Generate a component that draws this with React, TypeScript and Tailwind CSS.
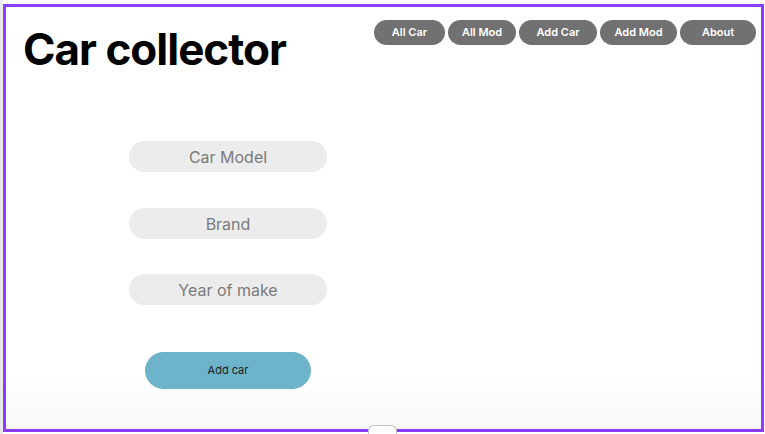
import React from 'react';

const navItems = ['All Car', 'All Mod', 'Add Car', 'Add Mod', 'About'];
const navWidths = ['w-[71px]', 'w-[68px]', 'w-[78px]', 'w-[77px]', 'w-[76px]'];
const fields = [
  { label: 'Car Model', gap: '' },
  { label: 'Brand', gap: 'mt-[36px]' },
  { label: 'Year of make', gap: 'mt-[35px]' },
];

export default function App() {
  return (
    <div
      className="relative flex w-[765px] h-[434px] bg-white overflow-hidden"
      style={{ fontFamily: 'Inter, "Noto Sans", sans-serif' }}
    >
      {/* editor gutter */}
      <div className="w-[3px] h-full bg-[#e9e9ec]" />

      {/* selected page */}
      <div className="mt-[4px] w-[761px] h-[428px] border-[3px] border-[#8b3dff] bg-linear-to-b from-white from-88% to-[#f6f7f7] flex flex-col">
        {/* Header */}
        <div className="flex items-start justify-between pl-[17px] pr-[5px]">
          <h1 className="mt-[20px] text-[44px] leading-none font-bold text-black tracking-[-1px]">
            Car collector
          </h1>
          <nav className="mt-[13px] flex gap-[3px]">
            {navItems.map((item, i) => (
              <button
                key={item}
                className={`${navWidths[i]} h-[25px] rounded-full bg-[#717171] text-white text-[11px] font-semibold`}
              >
                {item}
              </button>
            ))}
          </nav>
        </div>

        {/* Form */}
        <div className="ml-[123px] mt-[70px] w-[198px] flex flex-col items-center">
          {fields.map((f) => (
            <div
              key={f.label}
              className={`w-full h-[31px] rounded-full bg-[#ececec] flex items-center justify-center text-[16px] text-[#7b7b7b] ${f.gap}`}
            >
              {f.label}
            </div>
          ))}
          <button className="mt-[47px] w-[166px] h-[37px] rounded-full bg-[#6db3c9] text-[11px] text-[#1c1c1c]">
            Add car
          </button>
        </div>
      </div>

      {/* page resize handle */}
      <div className="absolute left-[368px] bottom-0 w-[29px] h-[9px] bg-white border border-b-0 border-[#bfc3c7] rounded-t-[6px]" />
    </div>
  );
}
